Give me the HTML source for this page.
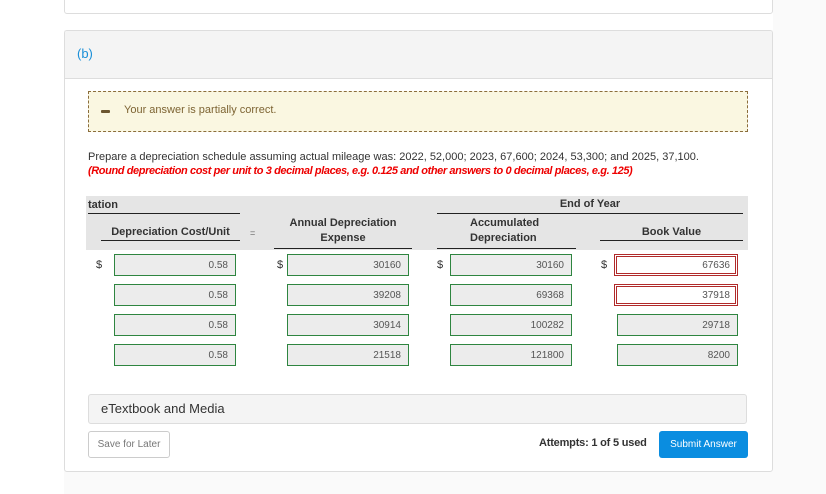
<!DOCTYPE html>
<html><head><style>
body{margin:0;width:826px;height:494px;background:#fafafa;font-family:"Liberation Sans",sans-serif;position:relative;overflow:hidden;color:#333}
.a{position:absolute}
.card{background:#fff;border:1px solid #ddd;border-radius:3px}
.inp{position:absolute;height:22px;background:#ececec;border:1px solid #2e8540;font-size:10px;color:#555;text-align:right;line-height:22px;padding-right:7px;box-sizing:border-box}
.red{background:#fff;border:1px solid #b12a2a;box-shadow:inset 0 0 0 1px #fff,inset 0 0 0 2px #b12a2a}
.hd{font-size:11px;font-weight:bold;color:#333;text-align:center;line-height:15px}
.ln{position:absolute;height:1px;background:#222}
.d{position:absolute;font-size:11px;color:#333}
</style></head><body>
<div class="a" style="left:0;top:0;width:64px;height:494px;background:#fff"></div>
<div class="a" style="left:64px;top:0;width:709px;height:30px;background:#fff"></div>
<div class="a card" style="left:64px;top:-4px;width:707px;height:16px"></div>
<div class="a card" style="left:64px;top:30px;width:707px;height:440px;overflow:hidden">
 <div class="a" style="left:0;top:0;width:707px;height:47px;background:#f4f4f4;border-bottom:1px solid #ddd"></div>
 <div class="a" style="left:12px;top:15px;font-size:13px;color:#1a8fd8">(b)</div>
</div>
<div class="a" style="left:88px;top:91px;width:658px;height:39px;background:#faf7e1;border:1px dashed #8b6d3b"></div>
<div class="a" style="left:101px;top:110px;width:9px;height:3px;background:#6b5630;border-radius:1px"></div>
<div class="a" style="left:124px;top:104px;font-size:11px;color:#7d6433">Your answer is partially correct.</div>
<div class="a" style="left:88px;top:151px;font-size:11px;color:#333">Prepare a depreciation schedule assuming actual mileage was: 2022, 52,000; 2023, 67,600; 2024, 53,300; and 2025, 37,100.</div>
<div class="a" style="left:88px;top:165px;font-size:11px;color:#e00;font-weight:bold;font-style:italic;letter-spacing:-0.4px">(Round depreciation cost per unit to 3 decimal places, e.g. 0.125 and other answers to 0 decimal places, e.g. 125)</div>
<div class="a" style="left:86px;top:196px;width:662px;height:54px;background:#e5e5e5"></div>
<div class="a hd" style="left:88px;top:198px">tation</div>
<div class="ln" style="left:88px;top:213px;width:152px"></div>
<div class="a hd" style="left:101px;top:225px;width:139px">Depreciation Cost/Unit</div>
<div class="ln" style="left:101px;top:240px;width:139px"></div>
<div class="a hd" style="left:250px;top:226px;font-weight:normal;font-size:9px;color:#666">=</div>
<div class="a hd" style="left:274px;top:216px;width:138px">Annual Depreciation<br>Expense</div>
<div class="ln" style="left:274px;top:248px;width:138px"></div>
<div class="a hd" style="left:437px;top:197px;width:306px">End of Year</div>
<div class="ln" style="left:437px;top:213px;width:306px"></div>
<div class="a hd" style="left:470px;top:216px;text-align:left">Accumulated<br>Depreciation</div>
<div class="ln" style="left:437px;top:248px;width:139px"></div>
<div class="a hd" style="left:600px;top:225px;width:143px">Book Value</div>
<div class="ln" style="left:600px;top:240px;width:143px"></div>

<div class="d" style="left:96px;top:259px">$</div>
<div class="d" style="left:277px;top:259px">$</div>
<div class="d" style="left:437px;top:259px">$</div>
<div class="d" style="left:601px;top:259px">$</div>

<div class="inp" style="left:114px;top:254px;width:122px">0.58</div>
<div class="inp" style="left:287px;top:254px;width:122px">30160</div>
<div class="inp" style="left:450px;top:254px;width:122px">30160</div>
<div class="inp red" style="left:614px;top:254px;width:124px">67636</div>

<div class="inp" style="left:114px;top:284px;width:122px">0.58</div>
<div class="inp" style="left:287px;top:284px;width:122px">39208</div>
<div class="inp" style="left:450px;top:284px;width:122px">69368</div>
<div class="inp red" style="left:614px;top:284px;width:124px">37918</div>

<div class="inp" style="left:114px;top:314px;width:122px">0.58</div>
<div class="inp" style="left:287px;top:314px;width:122px">30914</div>
<div class="inp" style="left:450px;top:314px;width:122px">100282</div>
<div class="inp" style="left:617px;top:314px;width:121px">29718</div>

<div class="inp" style="left:114px;top:344px;width:122px">0.58</div>
<div class="inp" style="left:287px;top:344px;width:122px">21518</div>
<div class="inp" style="left:450px;top:344px;width:122px">121800</div>
<div class="inp" style="left:617px;top:344px;width:121px">8200</div>

<div class="a" style="left:88px;top:394px;width:659px;height:30px;background:#f4f4f4;border:1px solid #ddd;border-radius:3px;box-sizing:border-box"></div>
<div class="a" style="left:101px;top:401px;font-size:13px;color:#333">eTextbook and Media</div>
<div class="a" style="left:88px;top:431px;width:82px;height:27px;border:1px solid #ccc;border-radius:3px;box-sizing:border-box;font-size:10px;color:#777;text-align:center;line-height:25px;background:#fff">Save for Later</div>
<div class="a" style="left:539px;top:437px;font-size:11px;font-weight:bold;color:#333;letter-spacing:-0.2px">Attempts: 1 of 5 used</div>
<div class="a" style="left:659px;top:431px;width:89px;height:27px;background:#0a8de0;border-radius:3px;font-size:10px;color:#fff;text-align:center;line-height:27px">Submit Answer</div>
</body></html>
